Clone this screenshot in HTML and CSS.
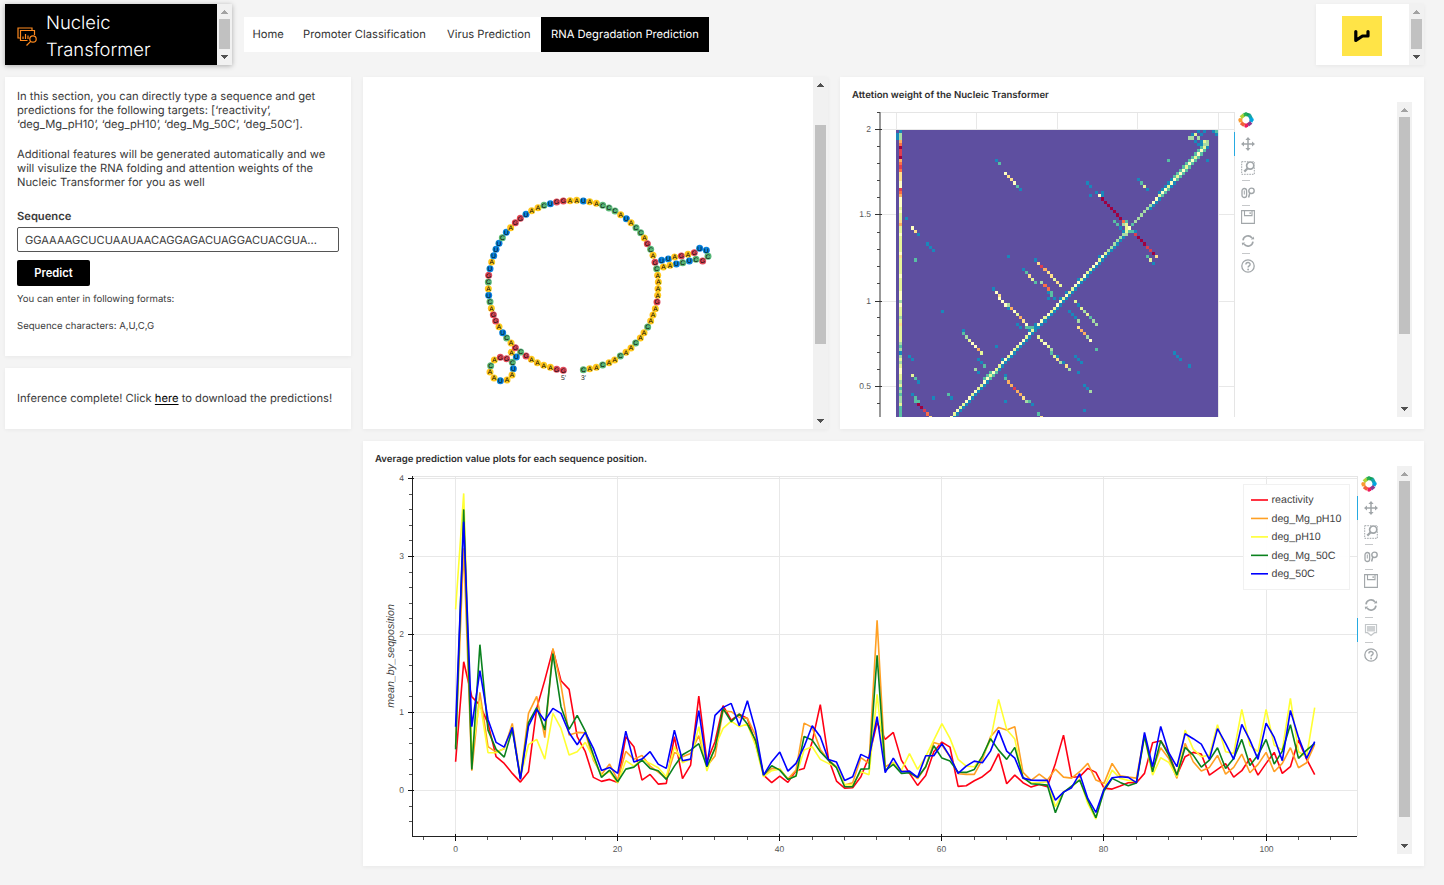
FILE: index.html
```html
<!DOCTYPE html>
<html lang="en">
<head>
<meta charset="utf-8">
<title>Nucleic Transformer</title>
<link rel="stylesheet" href="styles.css">
</head>
<body>
<svg class="defs" aria-hidden="true">
  <symbol id="i-up" viewBox="0 0 15 15"><path d="M4 10h7v-1h-1v-1h-1v-1h-1v-1h-1v1h-1v1h-1v1h-1z"/></symbol>
  <symbol id="i-down" viewBox="0 0 15 15"><path d="M4 5h7v1h-1v1h-1v1h-1v1h-1v-1h-1v-1h-1v-1h-1z"/></symbol>
  <symbol id="i-bokeh" viewBox="0 0 16 16">
    <g stroke-width="3.6" fill="none">
      <path d="M8 2.2 12 3.4" stroke="#12a05a"/><path d="M11.2 2.8 13.4 7" stroke="#14a3a8"/>
      <path d="M13.8 6 12.8 10" stroke="#00a6e0"/><path d="M13.2 10.4 9.8 13" stroke="#8a3a8f"/>
      <path d="M10 13.2 6.4 13.4" stroke="#ee1c5f"/><path d="M6.4 13.4 3 10.8" stroke="#f2603a"/>
      <path d="M2.6 10.4 2.6 6.2" stroke="#f99b32"/><path d="M2.8 5.6 6 3" stroke="#b3d335"/>
      <path d="M5.6 2.8 8.6 2.2" stroke="#2db34a"/>
    </g>
    <path d="M8 0 9.5 1.5h-3z" fill="#12a05a"/><path d="M16 8 14.500 9.500v-3z" fill="#00a6e0"/><path d="M8 16 6.500 14.500h3z" fill="#ee1c5f"/><path d="M0 8 1.500 6.500v3z" fill="#f99b32"/>
  </symbol>
  <symbol id="i-pan" viewBox="0 0 14 14"><path d="M7 1v12M1 7h12" stroke="#a1a6a9" stroke-width="1.5"/><path d="M7 0 9.6 3H4.4zM7 14 4.4 11h5.200zM0 7 3 4.400v5.200zM14 7l-3 2.600V4.400z" fill="#a1a6a9"/></symbol>
  <symbol id="i-box" viewBox="0 0 14 14"><path d="M.7 .700h12.600v12.600H.7z" fill="none" stroke="#a1a6a9" stroke-dasharray="1.600 1"/><circle cx="9.200" cy="4.600" r="4.600" fill="#fff"/><circle cx="9.200" cy="4.600" r="3.600" fill="none" stroke="#a1a6a9" stroke-width="1.700"/><path d="M6.700 7.200 3.300 10.600" stroke="#a1a6a9" stroke-width="2.200"/></symbol>
  <symbol id="i-wheel" viewBox="0 0 14 14"><rect x="1" y="2.500" width="4.600" height="9" rx="2.300" fill="none" stroke="#a1a6a9" stroke-width="1.300"/><path d="M3.300 4.500v4" stroke="#a1a6a9" stroke-width="1"/><circle cx="10.500" cy="4.800" r="2.700" fill="none" stroke="#a1a6a9" stroke-width="1.400"/><path d="M8.800 7 7.600 11.500" stroke="#a1a6a9" stroke-width="1.500"/></symbol>
  <symbol id="i-save" viewBox="0 0 14 14"><path d="M.6.6h12.800v12.800H.6zM3.500 1v4.600h7.500V1" fill="none" stroke="#a1a6a9" stroke-width="1.100"/><path d="M8.500 2.200h1.300v1.800H8.500z" fill="#a1a6a9"/></symbol>
  <symbol id="i-reset" viewBox="0 0 14 14"><path d="M2 6.300A5 5 0 0 1 11 4M12 7.700A5 5 0 0 1 3 10" fill="none" stroke="#a1a6a9" stroke-width="1.600"/><path d="M13.300 5.200 9.800 5.400l2.700-2.800zM.7 8.800l3.500-.2-2.700 2.800z" fill="#a1a6a9"/></symbol>
  <symbol id="i-hover" viewBox="0 0 14 14"><path d="M1.500 1.500h11v8.200H10.500L7 12.500 3.500 9.700H1.500z" fill="none" stroke="#c3c7c9" stroke-width="1.200"/><path d="M3 3h8v5.500H3z" fill="#ced1d3"/></symbol>
  <symbol id="i-help" viewBox="0 0 14 14"><circle cx="7" cy="7" r="6.200" fill="none" stroke="#a1a6a9" stroke-width="1.300"/><path d="M4.900 5.600C4.900 2.900 9.100 2.900 9.100 5.400 9.100 6.900 7.100 6.800 7.100 8.600" fill="none" stroke="#a1a6a9" stroke-width="1.400"/><circle cx="7.100" cy="10.500" r=".9" fill="#a1a6a9"/></symbol>
</svg>

<header class="header">
  <div class="brand">
    <div class="brand-body">
      <svg class="brand-icon" viewBox="0 0 21 20" fill="none" stroke="#ff8a1e" stroke-width="1.200">
        <path d="M3 11H1V1h14v2"/><path d="M10.500 13.500H3.500V3.500h14v4.500"/>
        <path d="M6 12v-2.500M8.500 12V7M11 12V8.500" /><circle cx="16" cy="12" r="3.200"/><path d="M13.700 14.300 9.500 18.500"/>
      </svg>
      <div class="brand-name">Nucleic<br>Transformer</div>
    </div>
    <div class="scroll scroll-head"><svg class="faded"><use href="#i-up"/></svg><i></i><svg><use href="#i-down"/></svg></div>
  </div>
  <nav class="nav">
    <a class="tab">Home</a><a class="tab">Promoter Classification</a><a class="tab">Virus Prediction</a><a class="tab active">RNA Degradation Prediction</a>
  </nav>
  <div class="badge-card">
    <div class="badge-body"><svg class="badge" viewBox="0 0 40 40"><path d="M13.800 15.500V24.500L20.500 20H26V15.500" fill="none" stroke="#000" stroke-width="3.200" stroke-linecap="round" stroke-linejoin="round"/></svg></div>
    <div class="scroll scroll-head"><svg class="faded"><use href="#i-up"/></svg><i></i><svg><use href="#i-down"/></svg></div>
  </div>
</header>

<main class="grid">
  <section class="side">
    <div class="card form">
      <p class="para">In this section, you can directly type a sequence and get<br>predictions for the following targets: [‘reactivity<span class="q">’</span>,<br>‘deg_Mg_pH10<span class="q">’</span>, ‘deg_pH10<span class="q">’</span>, ‘deg_Mg_50C<span class="q">’</span>, ‘deg_50C’].</p>
      <p class="para">Additional features will be generated automatically and we<br>will visulize the RNA folding and attention weights of the<br>Nucleic Transformer for you as well</p>
      <div class="label">Sequence</div>
      <div class="input">GGAAAAGCUCUAAUAACAGGAGACUAGGACUACGUA...</div>
      <button class="predict">Predict</button>
      <p class="hint">You can enter in following formats:</p>
      <p class="hint hint-last">Sequence characters: A,U,C,G</p>
    </div>
    <div class="card status">Inference complete! Click&nbsp;<a class="link">here</a>&nbsp;to download the predictions!</div>
  </section>

  <section class="card fold">
    <svg id="rna" class="rna" viewBox="363 77 450 352"></svg>
    <div class="scroll scroll-fold"><svg><use href="#i-up"/></svg><i></i><svg><use href="#i-down"/></svg></div>
  </section>

  <section class="card panel">
    <h2 class="title">Attetion weight of the Nucleic Transformer</h2>
    <div class="panel-body">
      <svg id="heat" class="heat" viewBox="852 102 383 315"></svg>
      <div class="tools">
        <svg class="logo"><use href="#i-bokeh"/></svg>
        <div class="tool on"><svg><use href="#i-pan"/></svg></div>
        <div class="tool"><svg><use href="#i-box"/></svg></div>
        <hr>
        <div class="tool"><svg><use href="#i-wheel"/></svg></div>
        <hr>
        <div class="tool"><svg><use href="#i-save"/></svg></div>
        <div class="tool"><svg><use href="#i-reset"/></svg></div>
        <hr>
        <div class="tool"><svg><use href="#i-help"/></svg></div>
      </div>
      <div class="scroll scroll-heat"><svg class="faded"><use href="#i-up"/></svg><i></i><svg><use href="#i-down"/></svg></div>
    </div>
  </section>

  <section class="card panel wide">
    <h2 class="title">Average prediction value plots for each sequence position.</h2>
    <div class="panel-body">
      <svg id="lines" class="lines" viewBox="375 466 983 388"></svg>
      <div class="tools">
        <svg class="logo"><use href="#i-bokeh"/></svg>
        <div class="tool on"><svg><use href="#i-pan"/></svg></div>
        <div class="tool"><svg><use href="#i-box"/></svg></div>
        <hr>
        <div class="tool"><svg><use href="#i-wheel"/></svg></div>
        <hr>
        <div class="tool"><svg><use href="#i-save"/></svg></div>
        <div class="tool"><svg><use href="#i-reset"/></svg></div>
        <hr>
        <div class="tool on"><svg><use href="#i-hover"/></svg></div>
        <hr>
        <div class="tool"><svg><use href="#i-help"/></svg></div>
      </div>
      <div class="scroll scroll-lines"><svg class="faded"><use href="#i-up"/></svg><i></i><svg><use href="#i-down"/></svg></div>
    </div>
  </section>
</main>
<script src="charts.js"></script>
</body>
</html>
```
FILE: styles.css
```css
* { box-sizing: border-box; }
body { margin: 0; padding: 4px 20px 19px 5px; background: #f4f4f4; color: #3b3b3b; font-family: Inter, "Liberation Sans", sans-serif; font-size: 11.200px; text-rendering: geometricPrecision; overflow: hidden; }
.defs { display: none; }
p, h2 { margin: 0; }

.header { display: flex; height: 61px; margin-bottom: 12px; }
.brand { display: flex; width: 227px; background: #000; box-shadow: 0 1px 5px rgba(0,0,0,.3); }
.brand-body { flex: 1; display: flex; align-items: center; padding: 4px 0 0 12px; overflow: hidden; }
.brand-icon { width: 21px; height: 20px; margin-right: 8px; }
.brand-name { color: #fff; font-size: 18.400px; line-height: 27px; font-weight: 300; }
.nav { display: flex; height: 35px; margin: 13px 0 0 12px; background: #fff; }
.tab { display: flex; align-items: center; padding: 0 10px 1px; color: #333; white-space: nowrap; }
.tab:nth-child(1) { width: 49px; padding-left: 8.500px; }
.tab:nth-child(2) { width: 144px; }
.tab:nth-child(3) { width: 104px; }
.tab.active { width: 168px; background: #000; color: #fff; }
.badge-card { display: flex; width: 108px; margin-left: auto; background: #fff; box-shadow: 0 1px 4px rgba(0,0,0,.06); }
.badge-body { flex: 1; padding: 12px 0 0 26px; }
.badge { display: block; width: 40px; height: 40px; background: #ffe447; }

.grid { display: grid; grid-template-columns: 346px 465px 584px; grid-template-rows: 352px 425px; gap: 12px; }
.card { background: #fff; box-shadow: 0 1px 4px rgba(0,0,0,.05); }
.side { display: flex; flex-direction: column; gap: 12px; }
.form { height: 279px; padding: 12px 12px 0; }
.para { line-height: 14px; margin-bottom: 16px; white-space: nowrap; }
.q { letter-spacing: -2px; }
.label { margin-top: 20px; line-height: 14px; font-weight: 600; }
.input { height: 25px; margin-top: 4px; padding: 0 7px; border: 1px solid #555; border-radius: 2px; font-size: 11.080px; line-height: 24px; white-space: nowrap; }
.predict { display: block; width: 73px; height: 26px; margin-top: 8px; padding: 0; border: 0; border-radius: 2px; background: #000; color: #fff; font: 600 11.200px Inter, sans-serif; }
.hint { margin-top: 8px; font-size: 9.600px; line-height: 12px; }
.hint-last { margin-top: 15px; }
.status { height: 61px; padding: 0 12px 1px; display: flex; align-items: center; white-space: nowrap; }
.link { color: #000; text-decoration: underline; text-underline-offset: 2px; }

.fold { display: flex; }
.rna { width: 450px; height: 352px; }
.panel { padding: 12px; }
.wide { grid-column: 2 / 4; }
.title { height: 13px; font-size: 9.600px; line-height: 13px; font-weight: 600; color: #2e2e2e; white-space: nowrap; }
.panel-body { display: flex; }
.heat { width: 383px; height: 315px; }
.lines { width: 983px; height: 388px; }

.tools { width: 30px; padding-top: 10px; }
.logo { display: block; width: 16px; height: 16px; margin: 0 0 4px 3px; }
.tool { display: flex; align-items: center; height: 24px; margin-left: -1px; padding-left: 5.500px; border-left: 1px solid transparent; }
.tool.on { border-left-color: #26aae1; }
.tool svg { width: 14px; height: 14px; }
.tools hr { width: 8px; height: 1px; margin: 0 0 -.300px 7px; border: 0; background: #c6c8ca; }

.scroll { display: flex; flex-direction: column; width: 15px; margin-left: auto; background: #f1f1f1; }
.scroll svg { width: 15px; height: 15px; flex: none; fill: #505050; }
.scroll .faded { fill: #a3a3a3; }
.scroll svg:last-child { margin-top: auto; }
.scroll i { width: 11px; margin-left: 2px; background: #c1c1c1; }
.scroll-head i { height: 30px; }
.scroll-fold i { height: 219px; margin-top: 33px; }
.scroll-heat i { height: 217px; }
.scroll-lines i { height: 336px; }

.tick { font: 8.500px "Liberation Sans", sans-serif; fill: #555; }
.legend-text { font: 10.670px "Liberation Sans", sans-serif; fill: #444; }
.axis-title { font: italic 10.670px "Liberation Sans", sans-serif; fill: #444; }
.base { font: 6.600px "Liberation Sans", sans-serif; fill: #000; }
.end { font: 6.800px "Liberation Sans", sans-serif; fill: #222; }
```
FILE: charts.js
```js
const NS = 'http://www.w3.org/2000/svg';
function add(parent, tag, attrs, text) {
  const el = document.createElementNS(NS, tag);
  for (const k in attrs) el.setAttribute(k, attrs[k]);
  if (text !== undefined) el.textContent = text;
  parent.appendChild(el);
  return el;
}
function line(p, x1, y1, x2, y2, stroke, w) {
  add(p, 'line', { x1, y1, x2, y2, stroke, 'stroke-width': w || 1 });
}

/* RNA secondary structure */
const rna = document.getElementById('rna');
const strand = `G250,541 G230,538 A211,532 A191,526 A172,518 A154,508 G138,498 C122,486 U109,501 C97,517 U100,536 A96,555 A81,570
U61,572 A42,564 A30,546 C32,527 A43,510 G61,502 G80,506 A94,487 G106,473 A93,459 C80,444 U68,428 A57,410 G47,393 G40,374 A34,355
C30,335 U26,316 A25,296 C25,276 G26,256 U30,236 A35,216 U41,197 U48,178 U57,160 C67,143 U79,127 A92,113 G106,98 G121,85 U138,73
A155,62 A174,53 C192,46 U211,41 G230,36 G250,33 A270,32 A290,31 U310,33 A329,35 A349,40 C368,46 C387,54 C405,63 A422,74 U439,86
A453,98 C468,113 C482,128 A493,144 G502,161 C512,178 A519,196 G525,217 U545,211 U565,207 A584,201 G604,198 A624,193 G643,188
U659,175 U679,181 C684,199 G668,213 C648,208 U628,213 C608,218 U589,222 A570,226 A550,231 C530,236 A533,256 A535,276 A534,296
A533,316 G531,336 A526,356 A519,375 A512,393 C503,411 A492,428 A481,444 C467,459 A453,474 A438,487 C421,498 A404,510 A387,518
C368,525 A349,532 A329,536 C310,539`.split(/\s+/).map(s => {
  const [x, y] = s.slice(1).split(',');
  return { b: s[0], x: 480 + x / 3, y: 190 + y / 3 };
});
const baseColor = { A: '#ffc81e', U: '#0a84dc', G: '#e04a5a', C: '#5cb878' };
add(rna, 'polyline', { points: strand.map(n => n.x + ',' + n.y).join(' '), fill: 'none', stroke: '#d8c07a', 'stroke-width': 1 });
strand.forEach(n => add(rna, 'circle', { cx: n.x, cy: n.y, r: 3.5, fill: baseColor[n.b] }));
strand.forEach(n => add(rna, 'text', { x: n.x, y: n.y + 2.3, 'text-anchor': 'middle', class: 'base' }, n.b));
add(rna, 'text', { x: 563.5, y: 380, 'text-anchor': 'middle', class: 'end' }, "5'");
add(rna, 'text', { x: 583.5, y: 380, 'text-anchor': 'middle', class: 'end' }, "3'");

/* Attention heat map: 107 x 107 cells, the lower rows run out of view */
const heat = document.getElementById('heat');
[896.5, 976.5, 1057.5, 1137.5, 1218.5].forEach(x => line(heat, x, 112, x, 417, '#e8e8e8'));
[129.5, 214.5, 301.5, 386.5].forEach(y => line(heat, 881, y, 1234, y, '#e8e8e8'));
line(heat, 881, 112.5, 1235, 112.5, '#e5e5e5');
line(heat, 1234.5, 112, 1234.5, 417, '#e5e5e5');
line(heat, 880, 112, 880, 417, '#999', 2);
[['2', 129.2], ['1.5', 214.5], ['1', 301.2], ['0.5', 386.3]].forEach(([t, y]) => {
  line(heat, 875, Math.floor(y) + .5, 882, Math.floor(y) + .5, '#333');
  add(heat, 'text', { x: 871, y: y + 2.8, 'text-anchor': 'end', class: 'tick' }, t);
});
for (let k = -1; k < 17; k++) if (k % 5) {
  const y = Math.floor(129.2 + k * 17.15) + .5;
  line(heat, 877, y, 880, y, '#444');
}
add(heat, 'rect', { x: 896, y: 130, width: 322, height: 287, fill: '#5e4fa0' });
const spectral = { b: '#1988bb', t: '#58bfa4', g: '#a6dba4', y: '#e6f598', w: '#ffffc4', p: '#fee08b', o: '#fdae61', r: '#fb6d46', s: '#dd3e50', d: '#9e0142' };
const cells = {};
const put = (c, r, k) => { if (r < 90) cells[c + ',' + r] = k; };
for (let c = 18; c < 103; c++) {
  const r = 107 - c;
  const left = c >= 93 ? 't' : c >= 88 ? 'b' : c < 20 ? null : (c >= 30 && c <= 32) ? 't' : (c === 68 || c === 61 || c === 57 || c === 55 || c === 47 || c === 36) ? 'b' : null;
  const right = c >= 92 ? 't' : c >= 90 ? 'b' : c >= 87 ? 't' : c >= 83 ? 'b' : c >= 77 ? null : (c >= 30 && c <= 32) ? 't' : 'b';
  if (left) put(c - 1, r, left);
  if (right) put(c + 1, r, right);
  put(c, r, c > 84 ? (c % 3 ? 'w' : 'y') : c > 69 ? 'g' : 'wywyyw'[c % 6]);
}
/* runs of cells going down and to the right: column, row, colours */
`0,1,b 0,2,b 33,9,bt 36,13,wppwtb 63,16,bb 64,20,b 66,19,bw 68,19,b 68,20,b 68,21,dddddddr 76,28,t 75,29,g 76,29,yw 76,30,y 75,31,b 76,31,y
77,31,t 78,31,t 79,31,b 75,32,g 76,32,g 79,32,sdddssdp 72,28,ttb 78,29,t 79,28,g 100,0,b 102,0,b 105,0,b 106,0,t 106,1,b
98,1,b 99,1,y 101,1,b 97,2,g 98,2,g 100,2,g 99,3,b 101,3,b 102,3,y 103,3,g 100,4,b 101,4,b 102,4,g 103,4,g 101,5,t 102,5,y 103,5,b
90,9,t 103,9,b 80,15,btyb 83,39,tyb 3,27,b 5,30,wpb 10,35,bbb 6,40,t 37,39,b 46,40,bpsoppypy 42,43,btpyt 48,47,grrt 51,51,t 50,50,b
50,52,b 52,52,b 32,49,bwp 34,52,www 37,54,g 37,55,b 38,55,owyopw 40,60,bb 43,61,t 44,61,t 44,62,b 45,62,y 46,62,b 45,61,t 46,61,b
15,56,b 22,62,b 22,63,tgywwoy 33,67,b 27,71,bbt 26,74,gb 4,70,bb 5,76,ytb 12,83,b 17,82,tb 5,82,bt 6,84,t 7,84,t 7,85,ddsrp
36,76,b 36,77,toosoopg 44,84,tb 36,84,b 47,88,tp 47,64,yywyg 51,69,ty 53,70,b 53,71,pg 55,72,b 56,73,pg 59,53,ybygytgg
57,56,bbbg 60,61,poogw 66,68,t 59,70,bbb 60,75,b 62,79,bbg 62,87,b 92,69,bbb 97,73,b`.split(/\s+/).forEach(s => {
  const [c, r, k] = s.split(',');
  [...k].forEach((ch, i) => put(+c + i, +r + i, ch));
});
[...'bggordssdorsrpppwwsrowwwywyypoyywyyyyywpyyyyywyyyywwwgwyyygypyyyyygtgbgygywwyygytgtggyttttt'].forEach((k, r) => put(1, r, k));
for (const key in cells) {
  const [c, r] = key.split(',').map(Number);
  const x = Math.round(896 + c * 3.01), x2 = Math.round(896 + (c + 1) * 3.01);
  const y = Math.round(130 + r * 3.21), y2 = Math.min(417, Math.round(130 + (r + 1) * 3.21));
  if (y2 > y) add(heat, 'rect', { x, y, width: x2 - x, height: y2 - y, fill: spectral[cells[key]] });
}

/* Average prediction lines */
const lines = document.getElementById('lines');
const X = v => 455.6 + v * 8.105, Y = v => 790.4 - v * 78;
const gx = v => Math.floor(X(v) - .1) + .5;
for (let v = 0; v <= 4; v++) line(lines, 413, Math.floor(Y(v)) + .5, 1357, Math.floor(Y(v)) + .5, '#e8e8e8');
for (let v = 0; v <= 100; v += 20) line(lines, gx(v), 477, gx(v), 836, '#e8e8e8');
line(lines, 413, 476.5, 1358, 476.5, '#e5e5e5');
line(lines, 1357.5, 476, 1357.5, 836, '#e5e5e5');

/* samples are grouped as [baseline, ordinates...], 234 steps to one unit */
const series = [
  ['#ff0014', [[1051, 965,665,770,795,850,950,970,1000,1026,995,805,720,628,722,748,890,935,1012,1024,1018,1027,890,920,1020,1003,1032,1030,890,1016,975,768,965,905,797,840,822,835,910],
    [691, 645,668,648,667,632,625,545,434,595,663,684,683,650,590,487,538,517,600,640,676,646,575,546,561,679,677,662,650,630,581,671,645,668,681,673,680,610],
    [571, 405,531,530,505,517,564,567,558,548,548,520,428,422,460,525,470,457,462,525,508,491,531,512,475,525,490,457,520,500,420,477,524]]],
  ['#ffa024', [[1051, 920,325,992,757,920,936,926,850,1015,820,769,893,625,735,885,877,878,960,1003,972,1020,934,958,946,978,996,1015,937,950,940,887,978,948,812,815,832,835,885],
    [691, 648,625,627,657,630,489,502,568,600,620,675,668,593,610,181,620,607,632,636,656,620,547,555,590,641,643,643,598,530,502,510,500,637,661,642,660,627],
    [571, 531,534,515,490,540,550,490,527,531,534,405,510,443,475,535,430,485,513,502,466,522,502,462,518,493,457,515,490,443,503,488,433]]],
  ['#ffff32', [[1051, 508,160,940,785,938,938,925,860,1012,914,898,957,820,865,945,935,907,955,1006,995,1029,962,978,958,970,983,1010,920,968,957,860,993,920,865,843,860,852,915],
    [691, 650,632,627,657,648,570,560,598,610,620,673,675,635,644,403,632,608,630,581,628,590,540,491,535,598,618,620,590,540,418,508,537,655,668,668,665,740],
    [571, 575,562,537,610,657,565,510,535,541,545,410,525,473,487,530,390,447,470,465,374,455,460,328,437,455,328,435,450,295,455,470,323]]],
  ['#0a821e', [[1051, 928,208,988,614,870,928,951,868,1015,848,803,870,641,800,868,826,873,945,1012,990,1025,987,981,960,985,992,1018,978,944,930,911,980,925,806,845,822,852,900],
    [691, 645,617,630,658,648,529,540,575,600,623,680,680,627,626,286,632,613,640,638,652,620,557,594,603,636,637,628,588,536,570,598,562,652,671,673,675,758],
    [571, 577,558,540,600,653,573,535,547,557,549,408,515,422,466,525,442,465,501,480,443,505,475,418,496,465,418,492,453,374,475,450,430]]],
  ['#0000ff', [[1051, 860,245,860,692,838,907,921,862,1018,858,808,842,805,820,878,914,877,925,991,982,1000,873,966,957,935,972,985,870,962,957,812,977,826,802,790,857,782,870],
    [691, 645,605,576,633,610,560,497,530,598,606,661,650,583,595,470,638,594,635,633,652,587,587,551,590,640,618,603,608,573,511,573,594,654,660,661,661,720],
    [571, 576,563,521,595,637,567,533,530,532,548,397,500,379,458,500,401,416,432,478,386,430,478,373,420,478,369,412,482,331,412,475,425]]]
];
series.forEach(([color, groups]) => {
  const values = groups.flatMap(([base, ...ys]) => ys.map(y => (base - y) / 234));
  add(lines, 'polyline', { points: values.map((v, i) => X(i).toFixed(1) + ',' + Y(v).toFixed(1)).join(' '), fill: 'none', stroke: color, 'stroke-width': 1.6, 'stroke-linejoin': 'bevel' });
});

line(lines, 412.5, 476, 412.5, 837, '#222');
line(lines, 412, 836.5, 1357, 836.5, '#222');
for (let k = -2; k <= 20; k++) {
  const y = Math.floor(Y(k / 5)) + .5, major = k % 5 === 0;
  line(lines, major ? 408 : 409, y, major ? 414 : 412, y, major ? '#111' : '#555');
  if (major) add(lines, 'text', { x: 404, y: y + 2.8, 'text-anchor': 'end', class: 'tick' }, k / 5);
}
for (let k = -4; k <= 108; k += 4) {
  const x = gx(k), major = k % 20 === 0;
  line(lines, x, major ? 834 : 837, x, major ? 841 : 840, major ? '#111' : '#555');
  if (major) add(lines, 'text', { x, y: 852, 'text-anchor': 'middle', class: 'tick' }, k);
}
add(lines, 'text', { transform: 'translate(394 656) rotate(-90)', 'text-anchor': 'middle', class: 'axis-title' }, 'mean_by_seqposition');

add(lines, 'rect', { x: 1243.5, y: 484.5, width: 106, height: 105, fill: '#fff', 'fill-opacity': .95, stroke: '#f1f1f1' });
['reactivity', 'deg_Mg_pH10', 'deg_pH10', 'deg_Mg_50C', 'deg_50C'].forEach((name, i) => {
  line(lines, 1251, 500 + i * 18.45, 1268, 500 + i * 18.45, series[i][0], 1.6);
  add(lines, 'text', { x: 1271.5, y: 503 + i * 18.5, class: 'legend-text' }, name);
});
```
